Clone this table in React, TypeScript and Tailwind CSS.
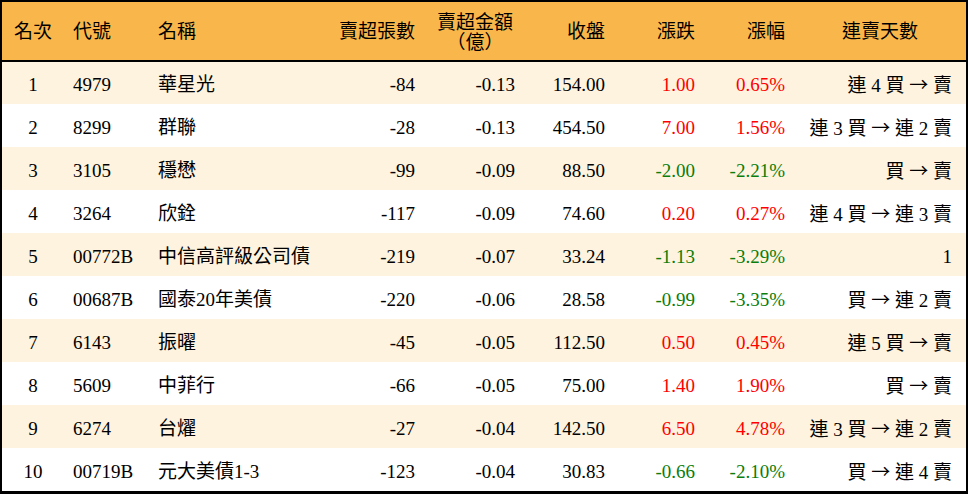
import React from 'react';

type Row = {
  rank: number;
  code: string;
  name: string;
  shares: string;
  amount: string;
  close: string;
  change: string;
  pct: string;
  streak: string;
};

const rows: Row[] = [
  { rank: 1, code: '4979', name: '華星光', shares: '-84', amount: '-0.13', close: '154.00', change: '1.00', pct: '0.65%', streak: '連 4 買 → 賣' },
  { rank: 2, code: '8299', name: '群聯', shares: '-28', amount: '-0.13', close: '454.50', change: '7.00', pct: '1.56%', streak: '連 3 買 → 連 2 賣' },
  { rank: 3, code: '3105', name: '穩懋', shares: '-99', amount: '-0.09', close: '88.50', change: '-2.00', pct: '-2.21%', streak: '買 → 賣' },
  { rank: 4, code: '3264', name: '欣銓', shares: '-117', amount: '-0.09', close: '74.60', change: '0.20', pct: '0.27%', streak: '連 4 買 → 連 3 賣' },
  { rank: 5, code: '00772B', name: '中信高評級公司債', shares: '-219', amount: '-0.07', close: '33.24', change: '-1.13', pct: '-3.29%', streak: '1' },
  { rank: 6, code: '00687B', name: '國泰20年美債', shares: '-220', amount: '-0.06', close: '28.58', change: '-0.99', pct: '-3.35%', streak: '買 → 連 2 賣' },
  { rank: 7, code: '6143', name: '振曜', shares: '-45', amount: '-0.05', close: '112.50', change: '0.50', pct: '0.45%', streak: '連 5 買 → 賣' },
  { rank: 8, code: '5609', name: '中菲行', shares: '-66', amount: '-0.05', close: '75.00', change: '1.40', pct: '1.90%', streak: '買 → 賣' },
  { rank: 9, code: '6274', name: '台燿', shares: '-27', amount: '-0.04', close: '142.50', change: '6.50', pct: '4.78%', streak: '連 3 買 → 連 2 賣' },
  { rank: 10, code: '00719B', name: '元大美債1-3', shares: '-123', amount: '-0.04', close: '30.83', change: '-0.66', pct: '-2.10%', streak: '買 → 連 4 賣' },
];

const th = 'h-[59px] pt-[3px] border-b-2 border-black font-normal align-middle';
const td = 'pt-[5px]';

function Streak({ text }: { text: string }) {
  const parts = text.split('→');
  if (parts.length === 1) return <>{text}</>;
  return (
    <>
      {parts[0]}
      <span style={{ fontFamily: '"Noto Sans CJK TC", sans-serif' }}>→</span>
      {parts[1]}
    </>
  );
}

export default function App() {
  return (
    <div
      className="w-[968px] h-[496px] bg-white text-black text-[19px]"
      style={{ fontFamily: '"Liberation Serif", "Noto Sans CJK TC", serif' }}
    >
      <div className="border-2 border-b-[3px] border-black">
        <table className="w-[964px] table-fixed border-collapse">
          <colgroup>
            <col className="w-[62px]" />
            <col className="w-[86px]" />
            <col className="w-[180px]" />
            <col className="w-[94px]" />
            <col className="w-[100px]" />
            <col className="w-[90px]" />
            <col className="w-[90px]" />
            <col className="w-[90px]" />
            <col className="w-[172px]" />
          </colgroup>
          <thead>
            <tr className="bg-[#f9b74b]">
              <th className={`${th} text-center`}>名次</th>
              <th className={`${th} text-left pl-[9px]`}>代號</th>
              <th className={`${th} text-left pl-[8px]`}>名稱</th>
              <th className={`${th} text-right pr-[9px]`}>賣超張數</th>
              <th className={`${th} text-center leading-[20px] pl-[2px]`}>
                <div>賣超金額</div>
                <div>（億）</div>
              </th>
              <th className={`${th} text-right pr-[9px]`}>收盤</th>
              <th className={`${th} text-right pr-[9px]`}>漲跌</th>
              <th className={`${th} text-right pr-[9px]`}>漲幅</th>
              <th className={`${th} text-center`}>連賣天數</th>
            </tr>
          </thead>
          <tbody>
            {rows.map((r) => {
              const up = !r.change.startsWith('-');
              const color = up ? 'text-[#ff0000]' : 'text-[#0a7d0a]';
              return (
                <tr key={r.rank} className={`h-[43px] ${r.rank % 2 === 1 ? 'bg-[#fef3df]' : 'bg-white'}`}>
                  <td className={`${td} text-center`}>{r.rank}</td>
                  <td className={`${td} text-left pl-[9px]`}>{r.code}</td>
                  <td className={`${td} text-left pl-[8px] whitespace-nowrap`}>{r.name}</td>
                  <td className={`${td} text-right pr-[9px]`}>{r.shares}</td>
                  <td className={`${td} text-right pr-[9px]`}>{r.amount}</td>
                  <td className={`${td} text-right pr-[9px]`}>{r.close}</td>
                  <td className={`${td} text-right pr-[9px] ${color}`}>{r.change}</td>
                  <td className={`${td} text-right pr-[9px] ${color}`}>{r.pct}</td>
                  <td className={`${td} text-right pr-[14px] whitespace-pre`}>
                    <Streak text={r.streak} />
                  </td>
                </tr>
              );
            })}
          </tbody>
        </table>
      </div>
    </div>
  );
}
